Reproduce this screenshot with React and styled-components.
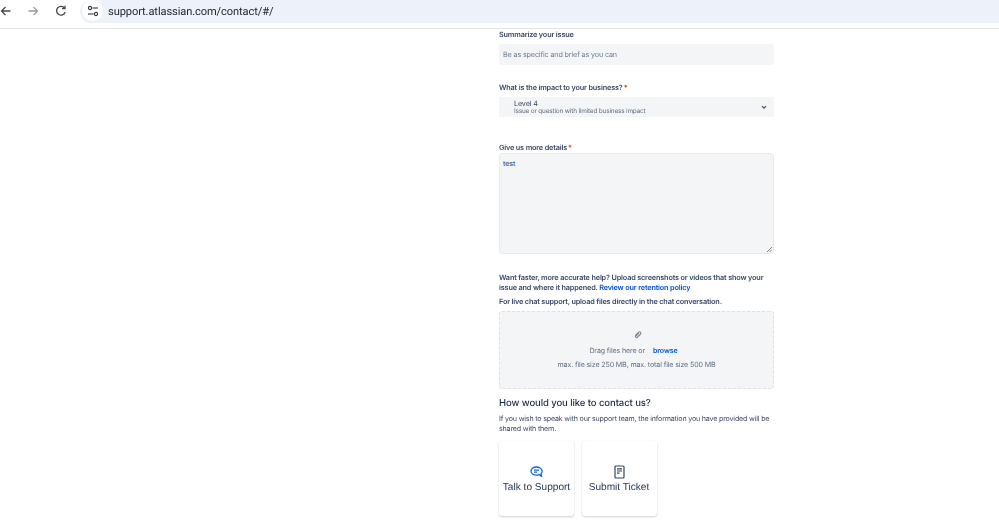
import React from 'react';
import styled, { createGlobalStyle } from 'styled-components';

const Global = createGlobalStyle`
  html, body { margin: 0; padding: 0; background: #fff; }
  body { width: 999px; height: 531px; overflow: hidden; font-family: Inter, "Liberation Sans", sans-serif; text-rendering: geometricPrecision; }
`;
const Page = styled.div`display: flex; flex-direction: column; height: 531px; overflow: hidden; filter: blur(0.3px);`;
const BrowserBar = styled.header`
  height: 29px; box-sizing: border-box; background: #fff; border-bottom: 1px solid #e2e3e5;
  display: flex; align-items: flex-start; flex: none;
`;
const NavGroup = styled.nav`height: 21px; width: 80px; display: flex; align-items: center; gap: 13px; flex: none;`;
const NavBtn = styled.span`display: flex; width: 14px; height: 14px;`;
const Omnibox = styled.div`
  flex: 1; height: 23px; background: #edf2fa; border-radius: 12px 0 0 12px; display: flex; align-items: center; padding-left: 2px;
`;
const SiteChip = styled.span`
  width: 21px; height: 21px; border-radius: 50%; background: #fff; display: flex;
  align-items: center; justify-content: center; margin-top: -2px;
`;
const Url = styled.span`font-family: Roboto, sans-serif; font-size: 11.1px; letter-spacing: -0.1px; color: #1f2226; margin-left: 5px; margin-top: -1px;`;
const Content = styled.main`
  margin-left: 499px; width: 275px; flex: 1; display: flex; flex-direction: column; color: #344563;
`;
const Label = styled.label`
  display: block; font-size: 7.3px; letter-spacing: -0.17px; line-height: 11px; font-weight: 600; color: #3b4a66;
  margin-top: ${(p) => p.$top || 0}px;
`;
const Req = styled.span`color: #de350b; margin-left: 1px;`;
const TextField = styled.div`
  height: 21px; background: #f4f5f7; border-radius: 3px; margin-top: 4px; display: flex; align-items: center;
  padding-left: 4px; font-size: 7.2px; letter-spacing: -0.14px; color: #6f7c91;
`;
const Select = styled.div`
  height: 20px; background: #f4f5f7; margin-top: 4px; display: flex; align-items: center; justify-content: space-between;
  padding: 0 6px 0 15px;
`;
const SelectTitle = styled.div`font-size: 7.2px; letter-spacing: -0.12px; line-height: 9px; color: #344563;`;
const SelectSub = styled.div`font-size: 6.4px; letter-spacing: -0.16px; line-height: 7px; color: #626f85;`;
const TextArea = styled.div`
  height: 101px; background: #f4f5f7; border: 1px solid #e8eaed; box-sizing: border-box; border-radius: 3px;
  padding: 5px 3px; font-size: 7.2px; letter-spacing: -0.12px; line-height: 10px; color: #253858; position: relative;
`;
const Grip = styled.svg`position: absolute; right: 1px; bottom: 1px;`;
const Help = styled.p`
  margin: ${(p) => p.$top}px 0 0; font-size: 7.3px; letter-spacing: -0.17px; line-height: 10px; font-weight: 600; color: #3b4a66;
`;
const LinkText = styled.a`color: #0052cc; font-weight: 600; text-decoration: none;`;
const DropZone = styled.div`
  height: 78px; box-sizing: border-box; background: #f4f5f7; border: 1px dashed #dfe1e6; border-radius: 3px;
  margin-top: 4px; display: flex; flex-direction: column; align-items: center; padding-top: 19px;
  font-size: 7.1px; letter-spacing: -0.13px; color: #626f85;
`;
const ClipSlot = styled.span`display: flex; margin-left: 3px;`;
const DropRow = styled.div`display: flex; gap: 8px; line-height: 10px; margin-top: 7px; padding-right: 6px;`;
const Limits = styled.div`line-height: 10px; margin-top: 4px;`;
const Heading = styled.h2`margin: 8px 0 0; font-size: 9.5px; letter-spacing: -0.08px; line-height: 13px; font-weight: 500; color: #172b4d;`;
const Intro = styled.p`margin: 4px 0 0; font-size: 7.1px; letter-spacing: -0.17px; line-height: 10px; color: #3b4a66;`;
const Options = styled.div`display: flex; gap: 7px; margin-top: 7px;`;
const Option = styled.div`
  width: 75px; height: 75px; background: #fff; border-radius: 3px;
  box-shadow: 0 1px 2px rgba(9,30,66,.2), 0 0 1px rgba(9,30,66,.12);
  display: flex; flex-direction: column; align-items: center; padding-top: 24px; box-sizing: border-box;
  font-family: "Liberation Sans", sans-serif; font-size: 10.1px; line-height: 14px; color: #253858;
  & + & { margin-left: 0.5px; }
`;
const IconSlot = styled.span`height: 14px; margin-bottom: 2px; display: flex; align-items: center;`;

const Back = () => (
  <svg width="14" height="14" viewBox="0 0 14 14" fill="none" stroke="#45484c" strokeWidth="1.3"><path d="M10.500 7H1.500M5.500 3 1.500 7l4 4" /></svg>
);
const Forward = () => (
  <svg width="14" height="14" viewBox="0 0 14 14" fill="none" stroke="#9a9da2" strokeWidth="1.3"><path d="M1.500 7h9M6.500 3l4 4-4 4" /></svg>
);
const Reload = () => (
  <svg width="14" height="14" viewBox="0 0 14 14" fill="none" stroke="#45484c" strokeWidth="1.3"><path d="M10.600 4.200A4.400 4.400 0 1 0 11.200 8" /><path d="M11 1.700v3H8" /></svg>
);
const Tune = () => (
  <svg width="12" height="12" viewBox="0 0 12 12" fill="none" stroke="#33373b" strokeWidth="1.1"><circle cx="3" cy="3" r="1.600" /><path d="M5.500 3h5.500" /><circle cx="9" cy="9" r="1.600" /><path d="M1 9h5.500" /></svg>
);
const Chevron = () => (
  <svg width="8" height="8" viewBox="0 0 8 8" fill="none" stroke="#42526e" strokeWidth="1.2"><path d="M2 3.200 4 5.200 6 3.200" /></svg>
);
const Clip = () => (
  <svg width="8" height="8" viewBox="0 0 8 8" fill="none" stroke="#7a869a" strokeWidth="1.1"><path d="M1.200 4.600 4.600 1.200a1.200 1.200 0 0 1 1.900 1.700L3.200 6.400a.9.9 0 0 1-1.400-1.300l3-3M2.600 7.100 6.900 2.900" /></svg>
);
const Chat = () => (
  <svg width="13" height="12" viewBox="0 0 13 12" fill="none" stroke="#0c66e4" strokeWidth="1.3"><path d="M6.400 1C3.400 1 1 2.800 1 5.100s2.400 4.100 5.400 4.100c1 0 2-.2 2.700-.6l2.400 1.600-.5-2.500c.8-.7 1.200-1.600 1.200-2.600C11.900 2.800 9.400 1 6.400 1Z" /><path d="M4 4.200h5M4 6.200h3" /></svg>
);
const Ticket = () => (
  <svg width="11" height="14" viewBox="0 0 11 14" fill="none" stroke="#344563" strokeWidth="1.2"><rect x="1" y="1" width="9" height="12" rx="1" /><path d="M3 3.800h5M3 6h5M3 8.200h2.500" /></svg>
);

export default function App() {
  return (
    <Page>
      <Global />
      <BrowserBar>
        <NavGroup>
          <NavBtn><Back /></NavBtn>
          <NavBtn><Forward /></NavBtn>
          <NavBtn><Reload /></NavBtn>
        </NavGroup>
        <Omnibox>
          <SiteChip><Tune /></SiteChip>
          <Url>support.atlassian.com/contact/#/</Url>
        </Omnibox>
      </BrowserBar>
      <Content>
        <Label>Summarize your issue</Label>
        <TextField>Be as specific and brief as you can</TextField>
        <Label $top={17}>What is the impact to your business?<Req>*</Req></Label>
        <Select>
          <div>
            <SelectTitle>Level 4</SelectTitle>
            <SelectSub>Issue or question with limited business impact</SelectSub>
          </div>
          <Chevron />
        </Select>
        <Label $top={25}>Give us more details<Req>*</Req></Label>
        <TextArea>
          test
          <Grip width="6" height="6" viewBox="0 0 6 6" stroke="#555" strokeWidth=".7"><path d="M1 6 6 1M3.500 6 6 3.500" /></Grip>
        </TextArea>
        <Help $top={19}>
          Want faster, more accurate help? Upload screenshots or videos that show your issue and where it happened. <LinkText>Review our retention policy</LinkText>
        </Help>
        <Help $top={4}>For live chat support, upload files directly in the chat conversation.</Help>
        <DropZone>
          <ClipSlot><Clip /></ClipSlot>
          <DropRow>Drag files here or <LinkText>browse</LinkText></DropRow>
          <Limits>max. file size 250 MB, max. total file size 500 MB</Limits>
        </DropZone>
        <Heading>How would you like to contact us?</Heading>
        <Intro>If you wish to speak with our support team, the information you have provided will be shared with them.</Intro>
        <Options>
          <Option><IconSlot><Chat /></IconSlot>Talk to Support</Option>
          <Option><IconSlot><Ticket /></IconSlot>Submit Ticket</Option>
        </Options>
      </Content>
    </Page>
  );
}
